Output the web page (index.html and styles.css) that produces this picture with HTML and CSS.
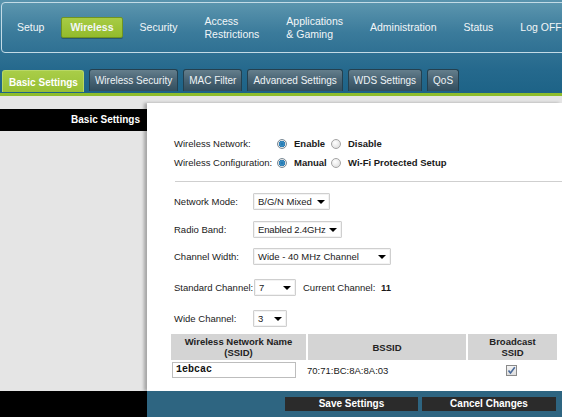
FILE: index.html
```html
<!DOCTYPE html>
<html>
<head>
<meta charset="utf-8">
<link rel="stylesheet" href="styles.css">
</head>
<body>
<div class="page">
  <header class="top">
    <nav class="mainnav">
      <span class="nav-item">Setup</span>
      <span class="nav-item active">Wireless</span>
      <span class="nav-item">Security</span>
      <span class="nav-item two">Access<br>Restrictions</span>
      <span class="nav-item two">Applications<br>&amp; Gaming</span>
      <span class="nav-item">Administration</span>
      <span class="nav-item">Status</span>
      <span class="nav-item">Log OFF</span>
    </nav>
    <div class="tabs">
      <span class="tab active">Basic Settings</span>
      <span class="tab">Wireless Security</span>
      <span class="tab">MAC Filter</span>
      <span class="tab">Advanced Settings</span>
      <span class="tab">WDS Settings</span>
      <span class="tab">QoS</span>
    </div>
  </header>
  <div class="green-rule"></div>
  <main class="content">
    <aside class="side">
      <div class="side-title">Basic Settings</div>
    </aside>
    <section class="panel">
      <div class="radio-row first">
        <span class="rlabel">Wireless Network:</span>
        <span class="opt w1"><span class="radio on"></span><b>Enable</b></span>
        <span class="opt"><span class="radio"></span><b>Disable</b></span>
      </div>
      <div class="radio-row">
        <span class="rlabel">Wireless Configuration:</span>
        <span class="opt w1"><span class="radio on"></span><b>Manual</b></span>
        <span class="opt"><span class="radio"></span><b>Wi-Fi Protected Setup</b></span>
      </div>
      <div class="rule"></div>
      <div class="field f1">
        <span class="flabel">Network Mode:</span>
        <span class="select s-mode">B/G/N Mixed<i class="caret"></i></span>
      </div>
      <div class="field f2">
        <span class="flabel">Radio Band:</span>
        <span class="select s-band">Enabled 2.4GHz<i class="caret"></i></span>
      </div>
      <div class="field f3">
        <span class="flabel">Channel Width:</span>
        <span class="select s-width">Wide - 40 MHz Channel<i class="caret"></i></span>
      </div>
      <div class="field f4">
        <span class="flabel">Standard Channel:</span>
        <span class="select s-std">7<i class="caret"></i></span>
        <span class="current">Current Channel: <b>11</b></span>
      </div>
      <div class="field f5">
        <span class="flabel">Wide Channel:</span>
        <span class="select s-wide">3<i class="caret"></i></span>
      </div>
      <div class="ssid-table">
        <div class="th">Wireless Network Name<br>(SSID)</div>
        <div class="th">BSSID</div>
        <div class="th">Broadcast<br>SSID</div>
        <div class="td"><span class="textbox">1ebcac</span></div>
        <div class="td bssid">70:71:BC:8A:8A:03</div>
        <div class="td center"><span class="checkbox"><svg width="9" height="9" viewBox="0 0 9 9"><path d="M1.5 4.5 L3.5 7 L7.8 1.2" fill="none" stroke="#4a6a9a" stroke-width="1.6"/></svg></span></div>
      </div>
    </section>
  </main>
  <footer class="foot">
    <div class="foot-left"></div>
    <div class="foot-right">
      <span class="btn">Save Settings</span>
      <span class="btn wide">Cancel Changes</span>
    </div>
  </footer>
</div>
</body>
</html>
```
FILE: styles.css
```css
* { box-sizing: border-box; }
html, body { margin: 0; padding: 0; }
body {
  font-family: "Liberation Sans", Arial, sans-serif;
  background: #e5e5e5;
  width: 562px;
  height: 417px;
  overflow: hidden;
}
.page { width: 562px; height: 417px; overflow: hidden; }

.top {
  height: 93px;
  background: linear-gradient(to bottom, #5993ad 0px, #4786a3 22px, #2f7193 52px, #25698d 70px, #1d6387 93px);
  padding-top: 2px;
  overflow: hidden;
}
.mainnav {
  margin-left: 1px;
  margin-right: -10px;
  height: 51px;
  border: 1px solid #c3dbe6;
  border-radius: 4px;
  display: flex;
  align-items: center;
  padding-left: 5px;
  gap: 7px;
  background: linear-gradient(to bottom, #5b95ae, #3b7b9b 60%, #2f7193);
}
.nav-item {
  color: #f2f6f8;
  font-size: 10.5px;
  line-height: 13px;
  padding: 0 10px;
  white-space: nowrap;
}
.nav-item.two { line-height: 13px; margin-top: 1px; }
.nav-item.active {
  background: linear-gradient(to bottom, #a7cc45, #93bb2c);
  border: 1px solid #6f9422;
  border-radius: 2px;
  font-weight: bold;
  height: 21px;
  line-height: 19px;
  padding: 0 8px;
  box-shadow: 0 1px 0 rgba(0,0,0,0.25);
}

.tabs {
  display: flex;
  gap: 5px;
  margin-top: 16px;
  padding-left: 2px;
  height: 23px;
  align-items: flex-start;
}
.tab {
  height: 22px;
  line-height: 21px;
  padding: 0 5px;
  font-size: 10px;
  color: #eef3f5;
  border: 1px solid #24404f;
  border-bottom: none;
  border-radius: 3px 3px 0 0;
  background: linear-gradient(to bottom, #647e8c, #4a6575 45%, #324e5e);
  white-space: nowrap;
}
.tab.active {
  margin-top: 1px;
  height: 22px;
  font-weight: bold;
  color: #ffffff;
  border-color: #b9d865;
  background: linear-gradient(to bottom, #a9cd48, #97c035);
  padding: 1px 5px 0 6px;
}
.green-rule { height: 3px; background: #8ebd2b; }

.content {
  display: grid;
  grid-template-columns: 147px 1fr;
  height: 295px;
  background: #e5e5e5;
}
.side { padding-top: 13px; }
.side-title {
  height: 22px;
  line-height: 22px;
  background: #000;
  color: #fff;
  font-weight: bold;
  font-size: 10px;
  text-align: right;
  padding-right: 7px;
}
.panel {
  margin-top: 7px;
  background: #fff;
  box-shadow: -3px 0 3px rgba(0,0,0,0.28);
  padding-left: 27px;
  font-size: 9.5px;
  color: #1a1a1a;
  white-space: nowrap;
}

.radio-row {
  display: flex;
  align-items: center;
  height: 19px;
}
.radio-row.first { margin-top: 31px; }
.rlabel { width: 103px; }
.opt { display: flex; align-items: center; gap: 7px; }
.opt.w1 { width: 54px; }
.opt b { font-weight: bold; }
.radio {
  width: 10px;
  height: 10px;
  border-radius: 50%;
  border: 1px solid #a4a4a4;
  background: radial-gradient(circle at 40% 35%, #ffffff, #d8d8d8);
  display: inline-block;
}
.radio.on {
  border-color: #7a8a96;
  background: radial-gradient(circle, #1a6fa8 0, #3b8fc4 2px, #2a79b0 3px, #e8e8e8 3.5px, #cfcfcf 5px);
}
.rule {
  height: 1px;
  background: #cfcfcf;
  margin: 9px 0 0 1px;
}

.field {
  display: flex;
  align-items: center;
  height: 16px;
}
.f1 { margin-top: 11px; }
.f2 { margin-top: 12px; }
.f3 { margin-top: 11px; }
.f4 { margin-top: 15px; }
.f5 { margin-top: 15px; }
.flabel { width: 79px; }
.select {
  position: relative;
  height: 17px;
  line-height: 15px;
  border: 1px solid #cfcfcf;
  border-radius: 1px;
  padding-left: 4px;
  background: #fff;
  box-shadow: inset 0 0 0 1px #f3f3f3;
}
.caret {
  position: absolute;
  right: 4px;
  top: 6px;
  width: 0;
  height: 0;
  border-left: 4px solid transparent;
  border-right: 4px solid transparent;
  border-top: 4px solid #000;
}
.s-mode { width: 77px; }
.s-band { width: 89px; letter-spacing: -0.15px; }
.s-width { width: 138px; }
.s-std { width: 42px; margin-left: 1px; }
.s-wide { width: 34px; }
.current { margin-left: 7px; }
.current b { margin-left: 3px; }

.ssid-table {
  margin-top: 8px;
  margin-left: -3px;
  display: grid;
  grid-template-columns: 135px 158px 89px;
  column-gap: 2px;
  row-gap: 2px;
  width: 386px;
}
.th {
  background: #d4d4d4;
  height: 26px;
  font-weight: bold;
  font-size: 9.5px;
  line-height: 11px;
  text-align: center;
  display: flex;
  align-items: center;
  justify-content: center;
  color: #222;
}
.td { height: 16px; display: flex; align-items: center; }
.textbox {
  margin-left: 1px;
  width: 124px;
  height: 16px;
  border: 1px solid #bdbdbd;
  font-family: "Liberation Mono", "Courier New", monospace;
  font-size: 10px;
  font-weight: bold;
  line-height: 14px;
  padding-left: 3px;
  color: #111;
}
.bssid { margin-left: -1px; }
.center { justify-content: center; }
.checkbox {
  width: 11px;
  height: 11px;
  border: 1px solid #8a8a8a;
  background: linear-gradient(#f4f4f4, #dedede);
  display: flex;
  align-items: center;
  justify-content: center;
  margin-left: -3px;
}

.foot {
  display: grid;
  grid-template-columns: 147px 1fr;
  height: 26px;
}
.foot-left { background: #000; }
.foot-right {
  background: #2e6581;
  display: flex;
  justify-content: flex-end;
  gap: 4px;
  padding: 6px 6px 0 0;
}
.btn {
  width: 133px;
  height: 14px;
  line-height: 14px;
  background: #2b2b2b;
  color: #fff;
  font-weight: bold;
  font-size: 10px;
  text-align: center;
}
.btn.wide { width: 134px; }
```
